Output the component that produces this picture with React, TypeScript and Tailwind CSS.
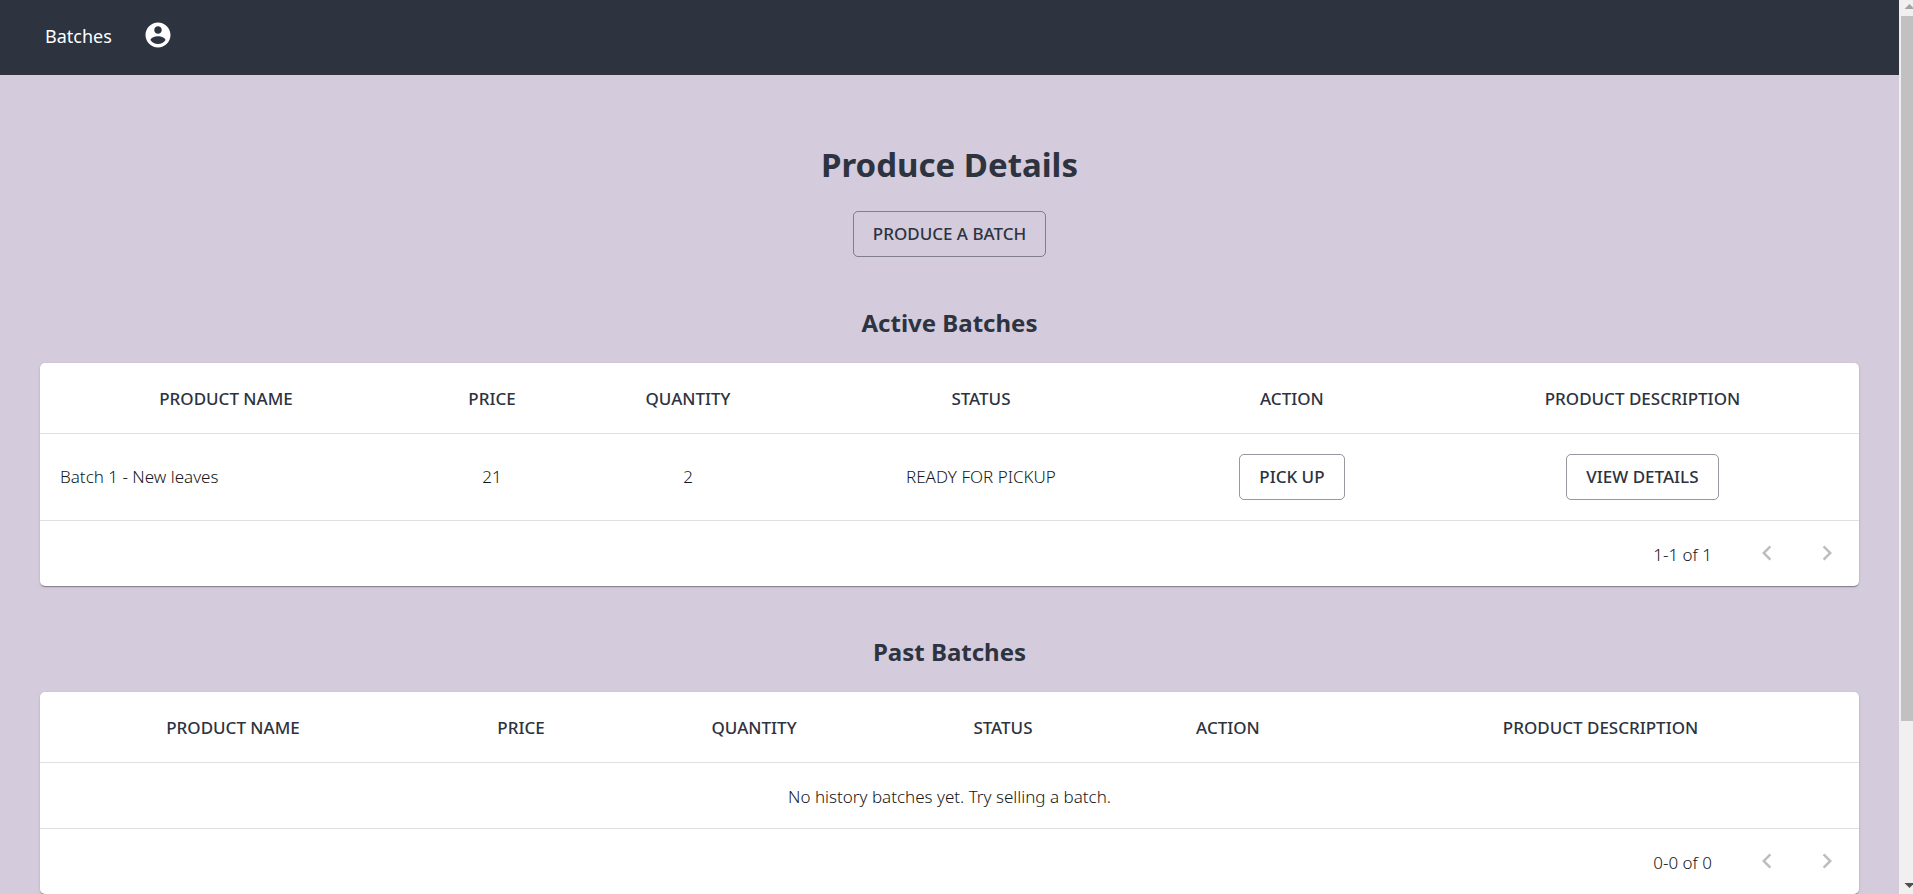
import type { ReactNode } from "react";

const COLUMNS = ["PRODUCT NAME", "PRICE", "QUANTITY", "STATUS", "ACTION", "PRODUCT DESCRIPTION"];

const ACTIVE_WIDTHS = ["w-[20.45%]", "w-[8.8%]", "w-[12.75%]", "w-[19.46%]", "w-[14.73%]", "w-[23.81%]"];
const PAST_WIDTHS = ["w-[21.22%]", "w-[10.45%]", "w-[15.17%]", "w-[12.2%]", "w-[12.54%]", "w-[28.42%]"];

function AccountIcon() {
  return (
    <svg viewBox="0 0 24 24" className="size-[30px] fill-current" aria-hidden="true">
      <path d="M12 2C6.48 2 2 6.48 2 12s4.48 10 10 10 10-4.48 10-10S17.52 2 12 2zm0 3c1.66 0 3 1.34 3 3s-1.34 3-3 3-3-1.34-3-3 1.34-3 3-3zm0 14.2c-2.5 0-4.71-1.28-6-3.22.03-1.99 4-3.08 6-3.08 1.99 0 5.97 1.09 6 3.08-1.29 1.94-3.5 3.22-6 3.22z" />
    </svg>
  );
}

function Chevron({ direction }: { direction: "left" | "right" }) {
  return (
    <svg viewBox="0 0 24 24" className="size-[30px] fill-current" aria-hidden="true">
      {direction === "left" ? (
        <path d="M15.41 7.41 14 6l-6 6 6 6 1.41-1.41L10.83 12z" />
      ) : (
        <path d="M10 6 8.59 7.41 13.17 12l-4.58 4.59L10 18l6-6z" />
      )}
    </svg>
  );
}

function OutlinedButton({ children }: { children: ReactNode }) {
  return (
    <button
      type="button"
      className="inline-flex h-[46px] items-center rounded-[5px] border border-[#2d333f]/50 px-[19px] text-[17px] font-medium text-[#2d333f]"
    >
      {children}
    </button>
  );
}

function BatchTable({
  label,
  widths,
  range,
  children,
}: {
  label: string;
  widths: string[];
  range: string;
  children: ReactNode;
}) {
  return (
    <div className="overflow-hidden rounded-[5px] bg-white shadow-[0_2px_1px_-1px_rgba(0,0,0,0.2),0_1px_1px_0_rgba(0,0,0,0.14),0_1px_3px_0_rgba(0,0,0,0.12)]">
      <table aria-label={label} className="w-full table-fixed border-separate border-spacing-0 text-center text-[17px]">
        <thead>
          <tr className="h-[71px]">
            {COLUMNS.map((name, i) => (
              <th key={name} scope="col" className={`border-b border-[#e0e0e0] pt-[2px] font-medium ${widths[i]}`}>
                {name}
              </th>
            ))}
          </tr>
        </thead>
        <tbody>{children}</tbody>
      </table>
      <div className="flex h-[65px] items-center justify-end pr-[2px]">
        <p className="mr-[25px] pt-[2px] text-[17px] font-light text-[#141820]">{range}</p>
        <button type="button" disabled aria-label="Previous page" className="flex size-[60px] items-center justify-center pb-[2px] text-black/26">
          <Chevron direction="left" />
        </button>
        <button type="button" disabled aria-label="Next page" className="flex size-[60px] items-center justify-center pb-[2px] text-black/26">
          <Chevron direction="right" />
        </button>
      </div>
    </div>
  );
}

function Scrollbar() {
  return (
    <div aria-hidden="true" className="flex w-[14px] shrink-0 flex-col bg-[#f0f0f0] pl-[2px]">
      <svg viewBox="0 0 12 16" className="h-4 w-3 shrink-0 fill-[#a3a3a3]">
        <path d="M8.5 4 13.5 9h-10z" />
      </svg>
      <div className="grow-[705] bg-[#c1c1c1]" />
      <div className="grow-[157]" />
      <svg viewBox="0 0 12 16" className="h-4 w-3 shrink-0 fill-[#505050]">
        <path d="M8.5 10 13.5 5h-10z" />
      </svg>
    </div>
  );
}

export default function App() {
  return (
    <div className="flex h-screen overflow-hidden bg-[#d4cbdc] font-['Noto_Sans','Open_Sans',sans-serif] text-[#2d333f]">
      <div className="min-w-0 flex-1 overflow-hidden">
        <header className="flex h-[75px] items-center bg-[#2d333f] pb-[5px] pl-[45px] text-white">
          <a href="#batches" className="pt-[2px] text-[18px]">
            Batches
          </a>
          <button type="button" aria-label="Account" className="ml-[31px]">
            <AccountIcon />
          </button>
        </header>
        <main className="px-10 pt-[65px] text-center">
          <h1 className="text-[33px] leading-[50px] font-bold">Produce Details</h1>
          <div className="mt-[21px] flex justify-center">
            <OutlinedButton>PRODUCE A BATCH</OutlinedButton>
          </div>
          <h2 className="mt-[46px] mb-[20px] text-2xl leading-[40px] font-bold">Active Batches</h2>
          <BatchTable label="Active batches" widths={ACTIVE_WIDTHS} range="1-1 of 1">
            <tr className="h-[87px] font-light text-[#141820] [&>td]:border-b [&>td]:border-[#e0e0e0]">
              <td className="pl-5 text-left">Batch 1 - New leaves</td>
              <td>21</td>
              <td>2</td>
              <td>READY FOR PICKUP</td>
              <td>
                <OutlinedButton>PICK UP</OutlinedButton>
              </td>
              <td>
                <OutlinedButton>VIEW DETAILS</OutlinedButton>
              </td>
            </tr>
          </BatchTable>
          <h2 className="mt-[46px] mb-[20px] text-2xl leading-[40px] font-bold">Past Batches</h2>
          <BatchTable label="Past batches" widths={PAST_WIDTHS} range="0-0 of 0">
            <tr className="h-[66px] font-light text-[#141820]">
              <td colSpan={6} className="border-b border-[#e0e0e0] pt-[2px]">
                No history batches yet. Try selling a batch.
              </td>
            </tr>
          </BatchTable>
        </main>
      </div>
      <Scrollbar />
    </div>
  );
}
